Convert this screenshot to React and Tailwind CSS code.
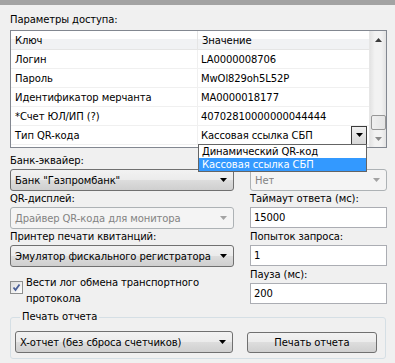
import React from "react";

// Windows 7 style settings dialog: access params table + device options

const rows = [
  ["Логин", "LA0000008706"],
  ["Пароль", "MwOl829oh5L52P"],
  ["Идентификатор мерчанта", "MA0000018177"],
  ["*Счет ЮЛ/ИП (?)", "40702810000000044444"],
];

function Arrow({ disabled }) {
  return (
    <svg width="7" height="4" viewBox="0 0 7 4" className="shrink-0">
      <path d="M0 0H7L3.5 4Z" fill={disabled ? "#a3a3a3" : "#000"} />
    </svg>
  );
}

function Combo({ text, disabled, className = "" }) {
  const look = disabled
    ? "border-[#adb2b5] bg-[#f4f4f4] text-[#838383]"
    : "border-[#707070] bg-[linear-gradient(#f2f2f2_0%,#ebebeb_50%,#dddddd_50%,#cfcfcf_100%)] text-black";
  return (
    <div className={`flex h-[22px] items-center justify-between rounded-[3px] border pl-[4px] pr-[6px] ${look} ${className}`}>
      <span className="truncate">{text}</span>
      <Arrow disabled={disabled} />
    </div>
  );
}

function Field({ value }) {
  return (
    <div className="flex h-[21px] items-center border border-[#abadb3] bg-white px-[3px]">{value}</div>
  );
}

function Label({ children }) {
  return <div className="flex h-[16px] items-end pb-[1px] leading-[14px]">{children}</div>;
}

function Scrollbar() {
  return (
    <div className="flex w-[17px] flex-col items-center border-l border-[#e6e6e6] bg-[linear-gradient(90deg,#e3e3e3,#f2f2f2_30%,#f2f2f2_70%,#e3e3e3)]">
      <div className="flex h-[17px] w-full items-center justify-center">
        <svg width="7" height="4" viewBox="0 0 7 4">
          <path d="M0 4H7L3.5 0Z" fill="#3c3c3c" />
        </svg>
      </div>
      <div className="flex-1" />
      <div className="h-[15px] w-[15px] rounded-[2px] border border-[#979797] bg-[linear-gradient(90deg,#f0f0f0,#e4e4e4)]" />
      <div className="flex h-[17px] w-full items-center justify-center">
        <svg width="7" height="4" viewBox="0 0 7 4">
          <path d="M0 0H7L3.5 4Z" fill="#8a8a8a" />
        </svg>
      </div>
    </div>
  );
}

function Table() {
  return (
    <div className="mt-[3px] flex h-[118px] w-[377px] border border-[#828790] bg-white">
      <div className="flex-1">
        <div className="flex h-[19px] border-b border-[#e5e5e5] bg-[linear-gradient(#ffffff_0%,#ffffff_45%,#f1f2f4_45%,#f1f2f4_100%)]">
          <div className="flex w-[187px] items-center border-r border-[#e5e5e5] pl-[4px]">Ключ</div>
          <div className="flex flex-1 items-center pl-[4px]">Значение</div>
        </div>
        {rows.map((r) => (
          <div key={r[0]} className="flex h-[19px] border-b border-[#f0f0f0]">
            <div className="flex w-[187px] items-center border-r border-[#f0f0f0] pl-[4px]">{r[0]}</div>
            <div className="flex flex-1 items-center pl-[3px]">{r[1]}</div>
          </div>
        ))}
        <div className="flex h-[19px] border-b border-[#f0f0f0]">
          <div className="flex w-[187px] items-center border-r border-[#f0f0f0] pl-[4px]">Тип QR-кода</div>
          <div className="relative flex flex-1 items-center justify-between">
            <span className="pl-[3px]">Кассовая ссылка СБП</span>
            <div className="mr-[2px] flex h-[19px] w-[16px] items-center justify-center border border-[#3c3c3c] bg-[linear-gradient(#f0f0f0,#d8d8d8)]">
              <Arrow />
            </div>
            <div className="absolute left-0 top-[18px] z-10 w-[169px] border border-[#646464] bg-white leading-[13px]">
              <div className="h-[13px] pl-[3px]">Динамический QR-код</div>
              <div className="h-[13px] bg-[#3399ff] pl-[3px] text-white">Кассовая ссылка СБП</div>
            </div>
          </div>
        </div>
      </div>
      <Scrollbar />
    </div>
  );
}

function CheckBox() {
  return (
    <div className="mt-[6px] h-[13px] w-[13px] shrink-0 border border-[#8e8f8f] bg-[linear-gradient(135deg,#dcdcdc,#ffffff)] p-[1px]">
      <svg width="9" height="9" viewBox="0 0 9 9">
        <path d="M1.5 4.5L3.5 7L7.5 1.5" stroke="#4a5f97" strokeWidth="1.8" fill="none" />
      </svg>
    </div>
  );
}

export default function App() {
  return (
    <div className="h-[363px] w-[395px] overflow-hidden bg-[#f0f0f0] font-['DejaVu_Sans',sans-serif] text-[10px] tracking-[-0.1px] text-black">
      <div className="h-[5px] bg-[#a3a3a3]" />
      <div className="pl-[10px] pr-[8px] pt-[8px]">
        <div className="leading-[14px]">Параметры доступа:</div>
        <Table />

        <div className="mt-[5px] grid grid-cols-[224px_137px] gap-x-[16px]">
          <div>
            <Label>Банк-эквайер:</Label>
            <Combo text={'Банк "Газпромбанк"'} />
          </div>
          <div>
            <Label>&nbsp;</Label>
            <Combo text="Нет" disabled />
          </div>

          <div>
            <Label>QR-дисплей:</Label>
            <Combo text="Драйвер QR-кода для монитора" disabled />
          </div>
          <div>
            <Label>Таймаут ответа (мс):</Label>
            <Field value="15000" />
          </div>

          <div>
            <Label>Принтер печати квитанций:</Label>
            <Combo text="Эмулятор фискального регистратора" />
          </div>
          <div>
            <Label>Попыток запроса:</Label>
            <Field value="1" />
          </div>

          <div className="flex gap-[3px] pt-[8px]">
            <CheckBox />
            <div className="leading-[16px]">
              Вести лог обмена транспортного
              <br />
              протокола
            </div>
          </div>
          <div>
            <Label>Пауза (мс):</Label>
            <Field value="200" />
          </div>
        </div>

        <fieldset className="mt-[3px] w-[376px] rounded-[3px] border border-[#d5dfe5] px-[4px] pb-[5px]">
          <legend className="ml-[5px] px-[2px] leading-[14px]">Печать отчета</legend>
          <div className="mt-[7px] flex items-center justify-between pr-[4px]">
            <Combo text="X-отчет (без сброса счетчиков)" className="w-[218px]" />
            <div className="flex h-[21px] w-[130px] items-center justify-center rounded-[3px] border border-[#707070] bg-[linear-gradient(#f2f2f2_0%,#ebebeb_50%,#dddddd_50%,#cfcfcf_100%)]">
              Печать отчета
            </div>
          </div>
        </fieldset>
      </div>
    </div>
  );
}
